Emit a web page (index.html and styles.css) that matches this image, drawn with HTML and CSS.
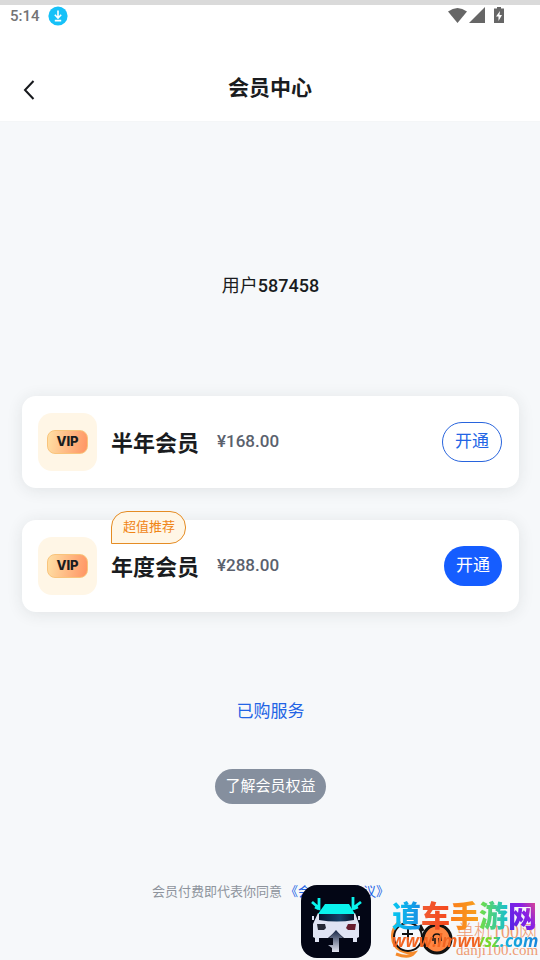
FILE: index.html
```html
<!DOCTYPE html>
<html lang="zh-CN">
<head>
<meta charset="utf-8">
<meta name="viewport" content="width=device-width, initial-scale=1">
<title>会员中心</title>
<link rel="stylesheet" href="styles.css">
</head>
<body>
<div class="page">
  <header class="top">
    <div class="status">
      <span class="clock">5:14</span>
      <svg class="download" viewBox="0 0 20 20" aria-hidden="true"><circle cx="10" cy="10" r="9.6" fill="#16c1f8"/><path d="M10 4.5v7M6.8 8.8l3.2 3.2 3.2-3.2M6.8 14.6h6.4" fill="none" stroke="#fff" stroke-width="1.6"/></svg>
      <svg class="signals" viewBox="0 0 58 18" aria-hidden="true">
        <path d="M0 4.5Q9.500-2.500 19 4.500L9.500 16z" fill="#666"/>
        <path d="M37 0v16H21z" fill="#666"/>
        <path d="M49 0h4v1.500h3V16H46V1.500h3z" fill="#666"/>
        <path d="M52 4l-4 5.500h2.500V14l3.500-6h-2.500z" fill="#fff"/>
      </svg>
    </div>
    <div class="nav">
      <button class="back" type="button" aria-label="返回"><svg viewBox="0 0 12 20" aria-hidden="true"><path d="M10.500 1L2 10l8.500 9" fill="none" stroke="#17191d" stroke-width="2"/></svg></button>
      <h1>会员中心</h1>
    </div>
  </header>

  <main>
    <p class="user">用户<b>587458</b></p>
    <section class="plans">
      <article class="plan">
        <div class="badge"><span>VIP</span></div>
        <h2>半年会员</h2>
        <span class="price">¥168.00</span>
        <button class="open outline" type="button">开通</button>
      </article>
      <article class="plan">
        <span class="tag">超值推荐</span>
        <div class="badge"><span>VIP</span></div>
        <h2>年度会员</h2>
        <span class="price">¥288.00</span>
        <button class="open solid" type="button">开通</button>
      </article>
    </section>
    <a class="bought" href="#bought">已购服务</a>
    <button class="benefits" type="button">了解会员权益</button>
    <p class="terms">会员付费即代表你同意 <a href="#terms">《会员服务协议》</a></p>
  </main>

  <svg class="car" viewBox="0 0 70 73" aria-hidden="true">
    <defs>
      <linearGradient id="glass" x1="0" x2="1"><stop offset="0" stop-color="#06142f"/><stop offset=".6" stop-color="#164067"/><stop offset="1" stop-color="#081128"/></linearGradient>
      <linearGradient id="arrow" x1="0" y1="0" x2="0" y2="1"><stop offset="0" stop-color="#142344"/><stop offset="1" stop-color="#e3e5f1"/></linearGradient>
    </defs>
    <rect width="70" height="73" rx="16" fill="#030615"/>
    <path d="M24 19h24l6 10H17z" fill="#0af3ed"/>
    <path d="M17 28l-5 11v13l2 1v4h4v-4h9l8-7 8 7h9v4h4v-4l2-1V39l-4-11-1 1H18z" fill="#dfe3f3"/>
    <path d="M18 29h35v6q-17 3-35 0z" fill="url(#glass)"/>
    <path d="M16 39h8l1 4-2 2h-6z" fill="#252936"/><path d="M55 39h-8l-2 4 2 2h7z" fill="#681d2e"/>
    <path d="M35 45l-7 8h4v7h-5l4 3v4h7V53h4z" fill="url(#arrow)"/>
    <path d="M11 17l7 6V13M18 24l-4-2M60 17l-8 6V12M52 24l5-2" fill="none" stroke="#0af3ed" stroke-width="2.800"/>
    <path d="M12 31v4M58 31v4" stroke="#dfe3f3" stroke-width="2"/>
  </svg>

  <div class="marks">
    <svg class="faces" viewBox="0 0 66 40" aria-hidden="true">
      <path d="M9 1C-2 10 0 25 9 30q10 4 14 3-5 6-18 1" fill="none" stroke="#f58b2d" stroke-width="3"/>
      <circle cx="17" cy="17" r="14" fill="#f7f9fc" stroke="#111" stroke-width="2"/>
      <path d="M17 9v11M11 14h11" stroke="#111" stroke-width="2"/>
      <circle cx="46" cy="19" r="14" fill="#ff8642" stroke="#111" stroke-width="3"/>
      <path d="M42 21v-3q0-4 4-4t4 4v3M44 18v6M48 18v6" fill="none" stroke="#111" stroke-width="1.500"/>
      <path d="M29 5l3 6" stroke="#111" stroke-width="3"/>
    </svg>
    <div class="danji"><span>单机100网</span><small>danji100.com</small></div>
    <div class="brand"><span class="c1">道</span><span class="c2">车</span><span class="c3">手</span><span class="c4">游</span><span class="c5">网</span></div>
    <div class="site">www.lmwwsz.com</div>
  </div>
</div>
</body>
</html>
```
FILE: styles.css
```css
* { box-sizing: border-box; }
body, h1, h2, p { margin: 0; }
body {
  background: #f6f8fa;
  color: #1a1c20;
  font-family: Roboto, "Noto Sans CJK SC", sans-serif;
}
button { padding: 0; border: 0; background: none; font: inherit; cursor: pointer; }
a { color: #2264e5; text-decoration: none; }
.page { position: relative; min-height: 100vh; overflow: hidden; }

.top { background: #fff; border-top: 5px solid #dadada; border-bottom: 1px solid #f4f6f7; }
.status { display: flex; align-items: center; height: 22px; padding: 0 34px 0 10px; }
.clock { color: #747474; font-size: 15px; font-weight: 500; line-height: 22px; }
.download { width: 20px; height: 20px; margin-left: 8px; }
.signals { width: 58px; height: 18px; margin-left: auto; }
.nav { display: grid; grid-template-columns: 1fr auto 1fr; align-items: center; height: 94px; padding: 28px 22px 0; align-content: center; }
.back { display: flex; width: 14px; height: 20px; margin-top: 4px; }
.back svg { width: 14px; height: 20px; }
h1 { font-size: 21px; font-weight: 700; line-height: 30px; }

main { display: flex; flex-direction: column; align-items: center; padding: 149px 21px 40px 22px; }
.user { font-size: 18px; line-height: 30px; }
.user b { font-weight: 500; }
.plans { display: grid; gap: 32px; width: 100%; margin-top: 95px; }
.plan {
  position: relative;
  display: flex;
  align-items: center;
  height: 92px;
  padding: 0 17px 0 16px;
  border-radius: 14px;
  background: #fff;
  box-shadow: 0 2px 16px rgba(40, 50, 50, .1);
}
.badge { display: grid; place-items: center; width: 59px; height: 58px; border-radius: 14px; background: #fff6e6; }
.badge span {
  width: 41px;
  height: 24px;
  border: 1px solid #f9c47c;
  border-radius: 8px;
  background: linear-gradient(100deg, #ffe0a5, #ff9463);
  font: 800 13px/20px Inter, sans-serif;
  text-align: center;
}
h2 { margin: 4px 0 0 14px; font-size: 22px; font-weight: 700; line-height: 30px; }
.price { margin: 0 auto 3px 18px; color: #5a616d; font-size: 17px; font-weight: 500; line-height: 24px; }
.open { height: 40px; padding: 0 12px 3px; border-radius: 20px; font-size: 17px; line-height: 24px; }
.outline { border: 1px solid #2864dd; color: #2264e5; }
.solid { background: #155dff; color: #fff; }
.tag {
  position: absolute;
  top: -9px;
  left: 89px;
  padding: 4px 10px 6px 11px;
  border: 1px solid #e58c24;
  border-radius: 16px 16px 16px 0;
  background: #fff6e6;
  color: #f08516;
  font-size: 13px;
  line-height: 21px;
}
.bought { margin-top: 87px; font-size: 17px; line-height: 24px; }
.benefits { height: 35px; margin-top: 46px; padding: 0 10px 2px; border-radius: 18px; background: #858f9e; color: #fff; font-size: 15px; line-height: 22px; }
.terms { margin-top: 78px; color: #8e949d; font-size: 13px; line-height: 20px; }

.car { position: absolute; right: 169px; bottom: 2px; width: 70px; height: 73px; }
.marks { position: absolute; right: 0; bottom: 0; width: 150px; height: 64px; }
.marks > * { position: absolute; white-space: nowrap; }
.faces { left: 1px; bottom: 0; width: 66px; height: 40px; }
.danji { left: 66px; top: 26px; color: #ee9c74; font-family: "Liberation Serif", "Noto Sans CJK SC", serif; }
.danji span, .danji small { display: block; }
.danji span { font-size: 18px; font-weight: 300; line-height: 20px; }
.danji small { font-size: 15px; line-height: 16px; }
.brand { left: 2px; top: 4px; font-size: 29px; font-weight: 900; line-height: 34px; }
.brand span { color: transparent; background-clip: text; -webkit-background-clip: text; }
.c1 { background-image: linear-gradient(90deg, #08c9f0, #178ce3); }
.c2 { background-image: linear-gradient(90deg, #f05b32, #f5481c); }
.c3 { background-image: linear-gradient(90deg, #fb7c1b, #f7a01c); }
.c4 { background-image: linear-gradient(90deg, #75df41, #16bdd3); }
.c5 { background-image: linear-gradient(60deg, #4a27e6, #8720e5 60%, #e94d83); }
.site {
  left: 2px;
  top: 33px;
  font: italic 700 17px/24px "Open Sans", sans-serif;
  color: transparent;
  background: linear-gradient(90deg, #f26522 0 60%, #78d92c 61%, #78d92c 70%, #16b6dc 74%, #1685dc);
  background-clip: text;
  -webkit-background-clip: text;
}
```
